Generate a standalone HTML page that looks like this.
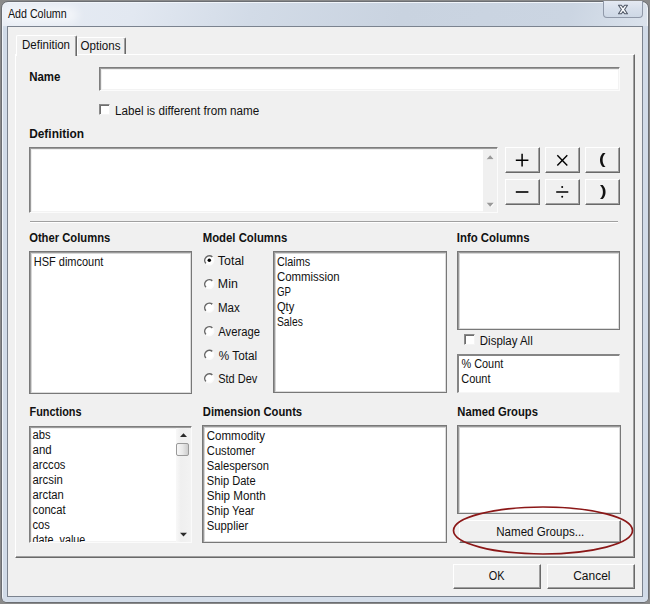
<!DOCTYPE html>
<html><head><meta charset="utf-8">
<style>
*{box-sizing:border-box;margin:0;padding:0}
html,body{width:650px;height:604px;overflow:hidden;background:#8a8a8a}
body{font-family:"Liberation Sans","DejaVu Sans",sans-serif;font-size:12px;color:#000;position:relative}
#win{position:absolute;left:1px;top:1px;width:648px;height:602px;background:linear-gradient(108deg,#e7ecf4 0%,#e2e8f1 16%,#d2dbe7 30%,#c9d3e0 48%,#cbd5e2 68%,#dfe6ef 80%,#d4dde9 87%,#dbe3ee 100%);border:1px solid #6b6e73;border-radius:7px 7px 6px 6px;box-shadow:inset 0 0 0 1px #f1f5fa;overflow:hidden}
#win i{position:absolute;display:block;background:#d1dbe8}
#close{position:absolute;left:603px;top:1px;width:40px;height:17px;border:1px solid #9099a9;border-top:none;border-radius:0 0 4px 4px;background:linear-gradient(#e4e9f2,#d7dfeb 50%,#ced8e5)}
#client{position:absolute;left:7px;top:26px;width:636px;height:571px;background:#f0f0f0;border:1px solid #7b838f}
.abs{position:absolute}
.t{position:absolute;white-space:nowrap;transform-origin:0 0;line-height:14px;font-size:12px;color:#111}
#t_tab1,#t_tab2,#t_ok,#t_cancel,.t.b{font-size:12px}
.b{font-weight:bold}
.sunk{position:absolute;background:#fff;border:1px solid;border-color:#7e7e7e #fbfbfb #fbfbfb #7e7e7e;box-shadow:inset 1px 1px 0 #9c9c9c, inset 2px 2px 0 #efefef, inset -1px -1px 0 #f3f3f3}
.box{position:absolute;background:#fff;border:1px solid #787878;box-shadow:inset 1px 1px 0 #9a9a9a, inset 2px 2px 0 #d6d6d6, inset -1px -1px 0 #dcdcdc}
.btn{position:absolute;background:#f0f0f0;border:1px solid;border-color:#fff #696969 #696969 #fff;box-shadow:inset -1px -1px 0 #a0a0a0}
.chk{position:absolute;width:11px;height:11px;background:#fff;border:1px solid;border-color:#8a8a8a #f4f4f4 #f4f4f4 #8a8a8a;box-shadow:inset 1px 1px 0 #6e6e6e}
/*FIT*/#t_title{transform:translate(-0.11px,0.00px) scaleX(0.891)}#t_tab1{transform:translate(0.04px,0.00px) scaleX(0.958)}#t_tab2{transform:translate(-0.40px,0.00px) scaleX(0.964)}#t_name{transform:translate(0.18px,0.00px) scaleX(0.956)}#t_label{transform:translate(0.03px,0.00px) scaleX(0.971)}#t_def{transform:translate(0.16px,0.00px) scaleX(0.991)}#t_other{transform:translate(0.13px,0.00px) scaleX(0.937)}#t_model{transform:translate(-0.31px,0.00px) scaleX(0.946)}#t_info{transform:translate(-0.21px,0.00px) scaleX(0.951)}#t_hsf{transform:translate(0.79px,1.00px) scaleX(0.915)}#t_total{transform:translate(-0.16px,0.00px) scaleX(1.035)}#t_min{transform:translate(-0.13px,0.00px) scaleX(1.029)}#t_max{transform:translate(-0.06px,0.00px) scaleX(0.963)}#t_avg{transform:translate(0.28px,0.00px) scaleX(0.937)}#t_pct{transform:translate(0.83px,1.00px) scaleX(0.979)}#t_std{transform:translate(0.13px,0.00px) scaleX(0.917)}#t_claims{transform:translate(-0.06px,1.00px) scaleX(0.904)}#t_comm{transform:translate(-0.09px,1.00px) scaleX(0.950)}#t_gp{transform:translate(-0.00px,1.00px) scaleX(0.806)}#t_qty{transform:translate(-0.08px,1.00px) scaleX(0.928)}#t_sales{transform:translate(-0.04px,1.00px) scaleX(0.862)}#t_disp{transform:translate(-0.16px,0.00px) scaleX(0.955)}#t_pcount{transform:translate(0.46px,0.00px) scaleX(0.908)}#t_count{transform:translate(0.23px,0.00px) scaleX(0.915)}#t_func{transform:translate(0.52px,0.00px) scaleX(0.907)}#t_dim{transform:translate(-0.20px,0.00px) scaleX(0.937)}#t_ng{transform:translate(0.30px,0.00px) scaleX(0.937)}#t_f1{transform:translate(-0.47px,0.00px) scaleX(0.936)}#t_f2{transform:translate(-0.48px,0.00px) scaleX(0.955)}#t_f3{transform:translate(-0.47px,0.00px) scaleX(0.931)}#t_f4{transform:translate(-0.47px,0.00px) scaleX(0.943)}#t_f5{transform:translate(-0.47px,0.00px) scaleX(0.937)}#t_f6{transform:translate(-0.47px,0.00px) scaleX(0.935)}#t_f7{transform:translate(-0.46px,0.00px) scaleX(0.930)}#t_f8{transform:translate(-0.45px,0.00px) scaleX(0.899)}#t_d1{transform:translate(-0.20px,1.00px) scaleX(0.958)}#t_d2{transform:translate(-0.18px,1.00px) scaleX(0.931)}#t_d3{transform:translate(-0.18px,1.00px) scaleX(0.932)}#t_d4{transform:translate(-0.18px,1.00px) scaleX(0.926)}#t_d5{transform:translate(-0.21px,1.00px) scaleX(0.970)}#t_d6{transform:translate(-0.18px,1.00px) scaleX(0.929)}#t_d7{transform:translate(-0.19px,1.00px) scaleX(0.939)}#t_ngb{transform:translate(-0.76px,0.00px) scaleX(0.964)}#t_ok{transform:translate(-0.27px,0.00px) scaleX(0.909)}#t_cancel{transform:translate(0.18px,0.00px) scaleX(0.998)}/*ENDFIT*/
</style></head><body>
<div id="win"><i style="left:1px;top:24px;width:5px;height:575px"></i><i style="left:641px;top:24px;width:5px;height:575px"></i><i style="left:1px;top:595px;width:645px;height:5px;background:#d4dde9"></i><b style="position:absolute;left:0;top:5px;width:76px;height:16px;background:rgba(255,255,255,.55);filter:blur(5px);border-radius:8px"></b></div>
<div class="t" id="t_title" style="left:8px;top:7px">Add Column</div>
<div id="close"></div>
<svg class="abs" style="left:617px;top:4px" width="12" height="11" viewBox="0 0 12 11"><path d="M1.5 1.2 L4.4 1.2 L6 3.5 L7.6 1.2 L10.5 1.2 L7.6 5.5 L10.5 9.8 L7.6 9.8 L6 7.5 L4.4 9.8 L1.5 9.8 L4.4 5.5 Z" fill="#fbfcfd" stroke="#525a69" stroke-width="1.1" stroke-linejoin="round"/></svg>
<div id="client"></div>
<!-- tab panel -->
<div class="abs" style="left:15px;top:54px;width:620px;height:504px;border:1px solid;border-color:#fff #696969 #696969 #fff;box-shadow:inset -1px -1px 0 #a0a0a0"></div>
<div class="abs" style="left:16px;top:35px;width:61px;height:21px;background:#f0f0f0;border:1px solid;border-color:#fff #696969 transparent #fff;border-bottom:none;border-radius:2px 2px 0 0;box-shadow:inset -1px 0 0 #a0a0a0"></div>
<div class="abs" style="left:77px;top:37px;width:49px;height:17px;background:#f0f0f0;border:1px solid;border-color:#fff #696969 transparent #fff;border-bottom:none;border-radius:2px 2px 0 0;box-shadow:inset -1px 0 0 #a0a0a0"></div>
<div class="t" id="t_tab1" style="left:22px;top:38px">Definition</div>
<div class="t" id="t_tab2" style="left:81px;top:39px">Options</div>

<div class="t b" id="t_name" style="left:29px;top:70px">Name</div>
<div class="sunk" style="left:99px;top:66.6px;width:521px;height:24.3px"></div>
<div class="chk" style="left:99px;top:104px"></div>
<div class="t" id="t_label" style="left:115px;top:104px">Label is different from name</div>
<div class="t b" id="t_def" style="left:29px;top:127px">Definition</div>
<div class="sunk" style="left:29px;top:147.4px;width:469px;height:65.6px"></div>
<!-- disabled scrollbar -->
<div class="abs" style="left:483px;top:149px;width:14px;height:63px;background:#f0f0f0"></div>
<svg class="abs" style="left:483px;top:149px" width="14" height="63"><path d="M4.5 11 L8 7 L11.5 11 Z M4.5 54.5 L8 58.5 L11.5 54.5 Z" fill="#fff"/><path d="M3.7 10.2 L7.2 6.2 L10.7 10.2 Z M3.7 53.7 L7.2 57.7 L10.7 53.7 Z" fill="#9a9a9a"/></svg>

<!-- operator buttons -->
<div class="btn" style="left:505px;top:147px;width:35px;height:26px"></div>
<div class="btn" style="left:545px;top:147px;width:35px;height:26px"></div>
<div class="btn" style="left:585px;top:147px;width:35px;height:26px"></div>
<div class="btn" style="left:505px;top:179px;width:35px;height:26px"></div>
<div class="btn" style="left:545px;top:179px;width:35px;height:26px"></div>
<div class="btn" style="left:585px;top:179px;width:35px;height:26px"></div>

<!-- separator -->
<div class="abs" style="left:30px;top:221px;width:588px;height:2px;border-top:1px solid #a0a0a0;border-bottom:1px solid #fff"></div>

<div class="t b" id="t_other" style="left:29px;top:231px">Other Columns</div>
<div class="t b" id="t_model" style="left:203px;top:231px">Model Columns</div>
<div class="t b" id="t_info" style="left:457px;top:231px">Info Columns</div>

<div class="box" style="left:29px;top:251px;width:163px;height:142.5px"></div>
<div class="t" id="t_hsf" style="left:33px;top:254px">HSF dimcount</div>

<div class="box" style="left:272.7px;top:251px;width:174.3px;height:141.8px"></div>
<div class="box" style="left:457.2px;top:251px;width:162.6px;height:78.6px"></div>
<div class="chk" style="left:464px;top:334px"></div>
<div class="t" id="t_disp" style="left:480px;top:334px">Display All</div>
<div class="abs" style="left:457.4px;top:354.2px;width:162.6px;height:39.3px;background:#fff;border:solid;border-width:2px 1px 1px 2px;border-color:#858585 #f6f6f6 #f6f6f6 #858585"></div>

<div class="t b" id="t_func" style="left:29px;top:405px">Functions</div>
<div class="t b" id="t_dim" style="left:203px;top:405px">Dimension Counts</div>
<div class="t b" id="t_ng" style="left:457px;top:405px">Named Groups</div>

<div class="sunk" style="left:29px;top:425.5px;width:162.5px;height:117px"></div>
<div class="box" style="left:202.1px;top:425.2px;width:245.1px;height:118px"></div>
<div class="box" style="left:457.2px;top:425.4px;width:164px;height:88.3px"></div>
<div class="btn" style="left:459px;top:520px;width:162px;height:23px"></div>
<div class="btn" style="left:453px;top:564px;width:88px;height:25px"></div>
<div class="btn" style="left:547px;top:564px;width:88px;height:25px"></div>
<svg class="abs" style="left:440px;top:495px" width="210" height="70"><ellipse cx="103" cy="35.5" rx="89.5" ry="23.5" fill="none" stroke="#8b1717" stroke-width="1.7"/></svg>

<div class="t" id="t_total" style="left:218px;top:254px">Total</div>
<div class="t" id="t_min" style="left:218px;top:277px">Min</div>
<div class="t" id="t_max" style="left:218px;top:301px">Max</div>
<div class="t" id="t_avg" style="left:218px;top:325px">Average</div>
<div class="t" id="t_pct" style="left:218px;top:348px">% Total</div>
<div class="t" id="t_std" style="left:218px;top:372px">Std Dev</div>
<div class="t" id="t_claims" style="left:277px;top:254px">Claims</div>
<div class="t" id="t_comm" style="left:277px;top:269px">Commission</div>
<div class="t" id="t_gp" style="left:277px;top:284px">GP</div>
<div class="t" id="t_qty" style="left:277px;top:299px">Qty</div>
<div class="t" id="t_sales" style="left:277px;top:314px">Sales</div>
<div class="t" id="t_pcount" style="left:461px;top:357px">% Count</div>
<div class="t" id="t_count" style="left:461px;top:372px">Count</div>
<div class="abs" style="left:31px;top:427px;width:145px;height:115px;overflow:hidden">
<div class="t" id="t_f1" style="left:2px;top:1px">abs</div>
<div class="t" id="t_f2" style="left:2px;top:16px">and</div>
<div class="t" id="t_f3" style="left:2px;top:31px">arccos</div>
<div class="t" id="t_f4" style="left:2px;top:46px">arcsin</div>
<div class="t" id="t_f5" style="left:2px;top:61px">arctan</div>
<div class="t" id="t_f6" style="left:2px;top:76px">concat</div>
<div class="t" id="t_f7" style="left:2px;top:91px">cos</div>
<div class="t" id="t_f8" style="left:2px;top:106px">date_value</div>
</div>
<div class="t" id="t_d1" style="left:207px;top:428px">Commodity</div>
<div class="t" id="t_d2" style="left:207px;top:443px">Customer</div>
<div class="t" id="t_d3" style="left:207px;top:458px">Salesperson</div>
<div class="t" id="t_d4" style="left:207px;top:473px">Ship Date</div>
<div class="t" id="t_d5" style="left:207px;top:488px">Ship Month</div>
<div class="t" id="t_d6" style="left:207px;top:503px">Ship Year</div>
<div class="t" id="t_d7" style="left:207px;top:518px">Supplier</div>
<div class="t" id="t_ngb" style="left:497px;top:525px">Named Groups...</div>
<div class="t" id="t_ok" style="left:489px;top:569px">OK</div>
<div class="t" id="t_cancel" style="left:573px;top:569px">Cancel</div>

<!-- operator glyphs -->
<svg class="abs" style="left:505px;top:147px" width="115" height="58" viewBox="0 0 115 58" fill="none" stroke="#000" stroke-width="1.5">
<path d="M17.1 6.8 V19.6 M10.8 13.2 H23.4"/>
<path d="M52.3 8.3 L62.3 18.6 M62.3 8.3 L52.3 18.6" stroke-width="1.4"/>
<path d="M10.8 45 H23.4" stroke-width="1.6"/>
<path d="M51.2 45 H63.3" stroke-width="1.5"/><circle cx="57.2" cy="40.1" r="1" fill="#000" stroke="none"/><circle cx="57.2" cy="49.8" r="1" fill="#000" stroke="none"/>
</svg>
<div class="t b" id="t_lp" style="left:599px;top:152px;font-size:14px;transform:scaleX(1.4)">(</div>
<div class="t b" id="t_rp" style="left:600px;top:184px;font-size:14px;transform:scaleX(1.4)">)</div>
<!-- radios -->
<svg class="abs" style="left:203px;top:250px" width="13" height="136" viewBox="0 0 13 136">
<defs><g id="rb"><circle r="4.3" fill="#fff"/><path d="M3.25 -3.25 A4.6 4.6 0 0 0 -3.25 3.25" fill="none" stroke="#666" stroke-width="1.5"/><path d="M-3.25 3.25 A4.6 4.6 0 0 0 3.25 -3.25" fill="none" stroke="#fbfbfb" stroke-width="1.5"/></g></defs>
<use href="#rb" x="6.2" y="10.3"/>
<use href="#rb" x="6.2" y="34.1"/>
<use href="#rb" x="6.2" y="57.6"/>
<use href="#rb" x="6.2" y="81.2"/>
<use href="#rb" x="6.2" y="104.8"/>
<use href="#rb" x="6.2" y="128.3"/>
<circle cx="6.3" cy="10.3" r="1.75" fill="#000"/>
</svg>
<!-- functions scrollbar -->
<div class="abs" style="left:176.2px;top:428px;width:14px;height:113.5px;background:linear-gradient(90deg,#f8f8f8,#efefef 35%,#f2f2f2)"></div>
<div class="abs" style="left:176.2px;top:443px;width:12.8px;height:12.8px;border:1px solid #9a9a9a;border-radius:2px;background:linear-gradient(90deg,#f7f7f7,#e9e9e9 50%,#cdcdcd)"></div>
<svg class="abs" style="left:176px;top:427px" width="14" height="115"><path d="M4 10 L7.5 6.3 L11 10 Z M4 105.8 L7.5 109.5 L11 105.8 Z" fill="#2a2a2a"/></svg>
</body></html>
